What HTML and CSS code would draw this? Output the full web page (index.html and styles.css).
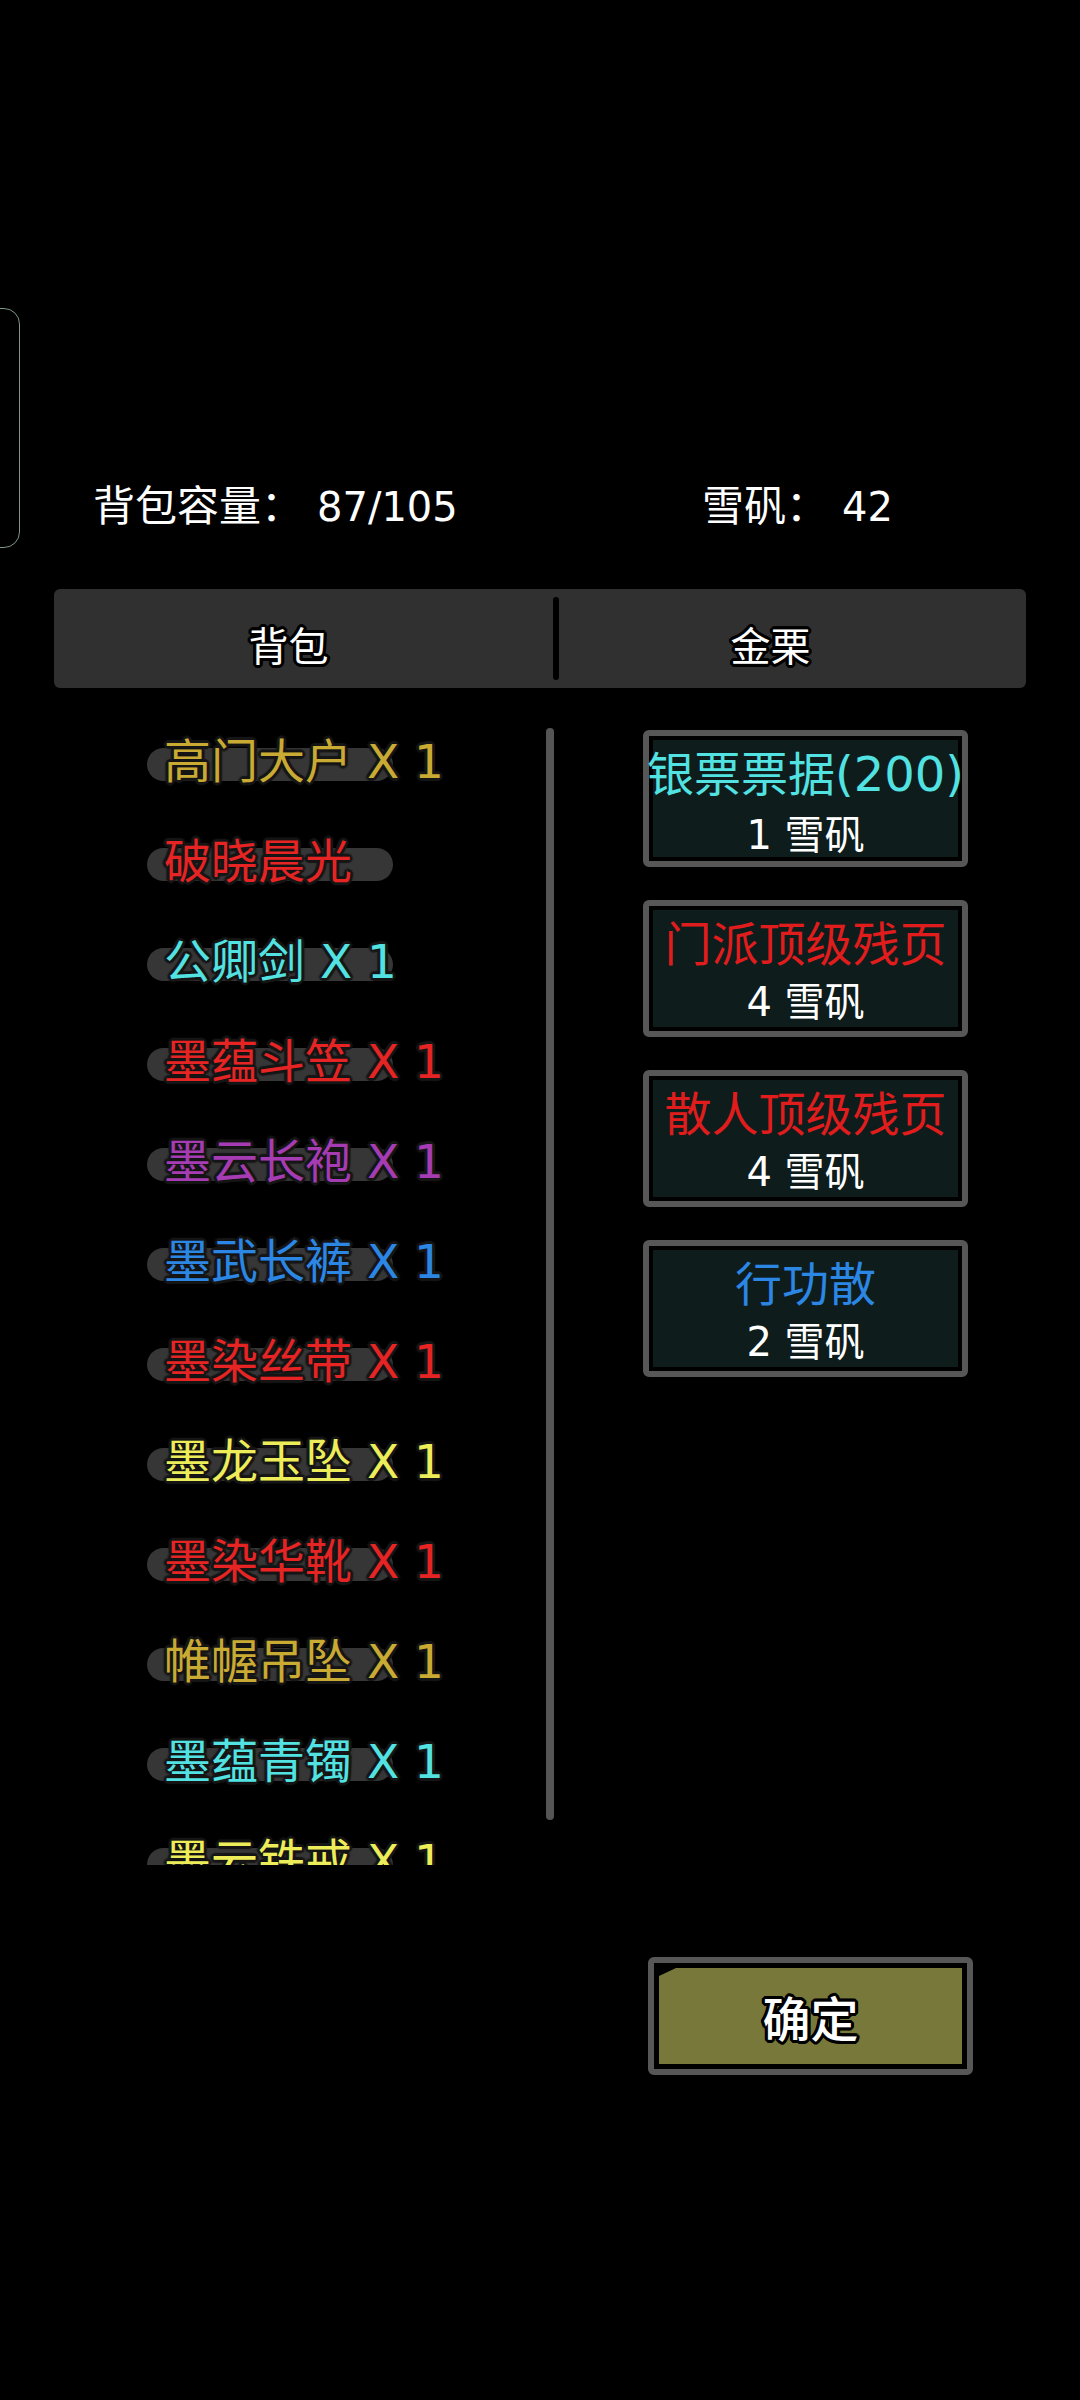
FILE: index.html
```html
<!DOCTYPE html>
<html lang="zh-CN">
<head>
<meta charset="utf-8">
<title>背包</title>
<link rel="stylesheet" href="styles.css">
</head>
<body>
<div class="edge-handle"></div>
<div class="page">
  <div class="stats">
    <div class="stat stat-cap">背包容量：<span class="num">87/105</span></div>
    <div class="stat">雪矾：<span class="num">42</span></div>
  </div>

  <div class="tabs">
    <div class="tab tab-bag"><span class="outlined">背包</span></div>
    <div class="tab-divider"></div>
    <div class="tab tab-gold"><span class="outlined">金栗</span></div>
  </div>

  <div class="content">
    <div class="list-wrap">
      <div class="list">
        <div class="item"><span class="pill"></span><span class="name c-gold">高门大户 X 1</span></div>
        <div class="item"><span class="pill"></span><span class="name c-red">破晓晨光</span></div>
        <div class="item"><span class="pill"></span><span class="name c-cyan">公卿剑 X 1</span></div>
        <div class="item"><span class="pill"></span><span class="name c-red">墨蕴斗笠 X 1</span></div>
        <div class="item"><span class="pill"></span><span class="name c-purple">墨云长袍 X 1</span></div>
        <div class="item"><span class="pill"></span><span class="name c-blue">墨武长裤 X 1</span></div>
        <div class="item"><span class="pill"></span><span class="name c-red">墨染丝带 X 1</span></div>
        <div class="item"><span class="pill"></span><span class="name c-yellow">墨龙玉坠 X 1</span></div>
        <div class="item"><span class="pill"></span><span class="name c-red">墨染华靴 X 1</span></div>
        <div class="item"><span class="pill"></span><span class="name c-gold">帷幄吊坠 X 1</span></div>
        <div class="item"><span class="pill"></span><span class="name c-cyan">墨蕴青镯 X 1</span></div>
        <div class="item"><span class="pill"></span><span class="name c-yellow">墨云铁戒 X 1</span></div>
      </div>
      <div class="scrollbar"></div>
    </div>

    <div class="cards">
      <div class="card">
        <div class="card-inner">
          <div class="card-title c-cyan">银票票据<span class="paren">(200)</span></div>
          <div class="card-price">1 雪矾</div>
        </div>
      </div>
      <div class="card">
        <div class="card-inner">
          <div class="card-title c-red2">门派顶级残页</div>
          <div class="card-price">4 雪矾</div>
        </div>
      </div>
      <div class="card">
        <div class="card-inner">
          <div class="card-title c-red2">散人顶级残页</div>
          <div class="card-price">4 雪矾</div>
        </div>
      </div>
      <div class="card">
        <div class="card-inner">
          <div class="card-title c-blue">行功散</div>
          <div class="card-price">2 雪矾</div>
        </div>
      </div>
    </div>
  </div>

  <div class="confirm">
    <div class="confirm-fill"><span class="outlined confirm-label">确定</span></div>
  </div>
</div>
</body>
</html>
```

FILE: styles.css
```css
html, body {
  margin: 0;
  padding: 0;
  background: #000;
}

body {
  width: 1080px;
  height: 2400px;
  overflow: hidden;
  position: relative;
  font-family: "DejaVu Sans", "Noto Sans CJK SC", sans-serif;
  color: #fff;
}

.edge-handle {
  position: absolute;
  left: -22px;
  top: 308px;
  width: 40px;
  height: 238px;
  border: 1.5px solid #7b9682;
  border-radius: 16px;
}

.page {
  display: flex;
  flex-direction: column;
}

/* header stats */
.stats {
  margin-top: 474px;
  height: 58px;
  display: flex;
  padding-left: 93px;
  font-size: 42px;
  line-height: 58px;
  font-family: "Noto Sans CJK SC", sans-serif;
}

.stat {
  white-space: nowrap;
}

.stat-cap {
  width: 609px;
}

.num {
  margin-left: 14px;
  font-family: "DejaVu Sans", sans-serif;
  font-size: 40px;
}

/* tabs */
.tabs {
  margin: 57px 54px 0 54px;
  height: 99px;
  background: #303030;
  border-radius: 6px;
  display: flex;
  align-items: center;
}

.tab {
  height: 100%;
  display: flex;
  align-items: center;
  justify-content: center;
  padding-top: 10px;
  box-sizing: border-box;
  font-family: "Noto Sans CJK SC", sans-serif;
  font-size: 40px;
}

.tab-bag {
  width: 499px;
  padding-right: 30px;
}

.tab-gold {
  flex: 1;
  padding-right: 44px;
}

.tab-divider {
  width: 6px;
  height: 83px;
  background: #000;
  border-radius: 3px;
}

.outlined {
  color: #fff;
  text-shadow:
    3px 0 0 #000, -3px 0 0 #000, 0 3px 0 #000, 0 -3px 0 #000,
    2px 2px 0 #000, -2px 2px 0 #000, 2px -2px 0 #000, -2px -2px 0 #000,
    3px 1px 0 #000, -3px 1px 0 #000, 3px -1px 0 #000, -3px -1px 0 #000,
    1px 3px 0 #000, -1px 3px 0 #000, 1px -3px 0 #000, -1px -3px 0 #000;
}

/* content */
.content {
  margin-top: 24px;
  display: flex;
  align-items: flex-start;
}

.list-wrap {
  margin-left: 147px;
  width: 407px;
  height: 1153px;
  display: flex;
}

.list {
  flex: 1;
  height: 100%;
  overflow: hidden;
  display: flex;
  flex-direction: column;
}

.item {
  flex: none;
  height: 100px;
  display: grid;
  align-items: center;
  justify-items: start;
}

.item > * {
  grid-area: 1 / 1;
}

.pill {
  width: 246px;
  height: 33px;
  margin-top: 4px;
  border-radius: 17px;
  background: #363636;
}

.name {
  margin-left: 17px;
  font-size: 47px;
  line-height: 100px;
  white-space: nowrap;
  text-shadow:
    3px 0 1px #161616, -3px 0 1px #161616, 0 3px 1px #161616, 0 -3px 1px #161616,
    2px 2px 1px #161616, -2px 2px 1px #161616, 2px -2px 1px #161616, -2px -2px 1px #161616;
}

.scrollbar {
  width: 8px;
  height: 1092px;
  margin-top: 16px;
  border-radius: 4px;
  background: #555;
}

.c-gold { color: #c9aa33; }
.c-red { color: #e62424; }
.c-red2 { color: #e11c1c; }
.c-cyan { color: #52e2e2; }
.c-purple { color: #a63cb3; }
.c-blue { color: #2b86e4; }
.c-yellow { color: #eded5a; }

/* cards */
.cards {
  margin-left: 89px;
  margin-top: 18px;
  width: 325px;
  display: flex;
  flex-direction: column;
  gap: 33px;
}

.card {
  height: 137px;
  box-sizing: border-box;
  border: 6px solid #575757;
  border-radius: 6px;
  background: #000;
  padding: 4px;
}

.card-inner {
  height: 100%;
  background: #0e1c1c;
  display: flex;
  flex-direction: column;
  align-items: center;
  padding-top: 7px;
  box-sizing: border-box;
  gap: 14px;
}

.card-title {
  font-family: "Noto Sans CJK SC", sans-serif;
  font-size: 47px;
  line-height: 48px;
  white-space: nowrap;
}

.paren {
  font-family: "DejaVu Sans", sans-serif;
  font-size: 48px;
}

.card-price {
  font-size: 40px;
  line-height: 46px;
  white-space: nowrap;
  color: #fff;
}

/* confirm button */
.confirm {
  margin-top: 92px;
  margin-left: 648px;
  width: 325px;
  height: 118px;
  box-sizing: border-box;
  border: 6px solid #575757;
  border-radius: 6px;
  background: #000;
  padding: 5px;
}

.confirm-fill {
  height: 100%;
  background: #78783a;
  clip-path: polygon(17px 0, 100% 0, 100% 100%, 0 100%, 0 8px);
  display: flex;
  align-items: center;
  justify-content: center;
  font-family: "Noto Sans CJK SC", sans-serif;
  font-size: 48px;
}

.confirm-label {
  font-weight: 500;
}
```
